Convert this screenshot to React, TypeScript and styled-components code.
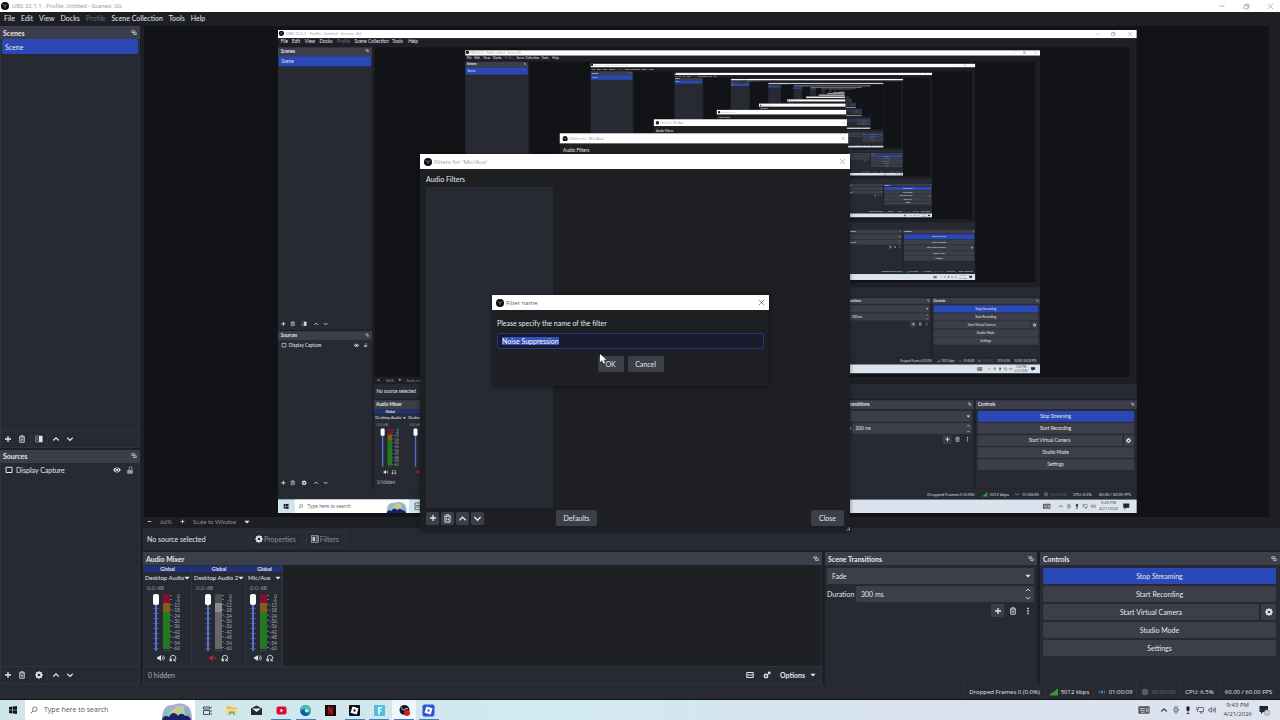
import React, { useEffect, useRef } from 'react';
import styled, { createGlobalStyle, css } from 'styled-components';

const c = {
  window: '#1d1f24',
  dock: '#272a33',
  header: '#3c3f4b',
  button: '#3c3e4a',
  canvas: '#121317',
  blue: '#2a49b6',
  band: '#1f3177',
  text: '#e6e7ec',
  muted: '#8d9099',
  line: '#31343f',
};
const font = 'Lato, "Open Sans", "Noto Sans", sans-serif';
const systemFont = '"Open Sans", "Noto Sans", sans-serif';

const Global = createGlobalStyle`
  * { box-sizing: border-box; }
  body { margin: 0; background: ${c.window}; color: ${c.text}; font: 7px/8px ${font}; overflow: hidden; }
  button, input, select { font: inherit; color: inherit; margin: 0; padding: 0; border: 0; background: none; }
  input:focus, select:focus { outline: none; }
  h1, h2, p, ul { margin: 0; padding: 0; font: inherit; list-style: none; }
  svg { display: block; flex: none; }
`;

/* ---------- icons, all on a 16 unit grid ---------- */

const glyphs: Record<string, React.ReactNode> = {
  plus: <path d="M8 2v12M2 8h12" strokeWidth="2.6" />,
  trash: <path d="M2 4h12M5.500 3.500V1.500h5v2M3.500 4v10.500h9V4M6.500 7v4.500M9.500 7v4.500" strokeWidth="1.700" />,
  up: <path d="M2.500 11L8 5.500l5.500 5.500" strokeWidth="2.400" />,
  down: <path d="M2.500 5.500L8 11l5.500-5.500" strokeWidth="2.400" />,
  caret: <path d="M1 4.500h14L8 12z" fill="currentColor" stroke="none" />,
  gear: (
    <>
      <circle cx="8" cy="8" r="4.400" strokeWidth="3.400" />
      <path d="M8 .5v3M8 12.500v3M.5 8h3M12.500 8h3M2.700 2.700l2 2M11.300 11.300l2 2M13.300 2.700l-2 2M4.700 11.300l-2 2" strokeWidth="2.800" />
    </>
  ),
  gears: (
    <>
      <circle cx="6" cy="10" r="3.400" strokeWidth="3" />
      <circle cx="12.500" cy="4" r="1.800" strokeWidth="2.200" />
    </>
  ),
  filter: (
    <>
      <rect x="1.500" y="2" width="13" height="12" strokeWidth="1.200" opacity="0.700" />
      <path d="M8 2h6.500v12H8z" fill="currentColor" stroke="none" />
      <path d="M3 4.500h4v7H3z" fill="currentColor" stroke="none" opacity="0.300" />
    </>
  ),
  filters: (
    <>
      <rect x="1" y="1.500" width="14" height="13" strokeWidth="1.200" />
      <path d="M3 3.500h5v9H3z" fill="currentColor" stroke="none" />
      <path d="M10.500 2v12M12.800 2v12" strokeWidth="1" />
    </>
  ),
  float: <path d="M2 2h8v4.500H2zM7 6.500v5.500h7V7.500h-4" strokeWidth="1.700" />,
  monitor: <path d="M2 2.500h12v10.500H2z" strokeWidth="2" strokeLinejoin="round" />,
  eye: (
    <>
      <path d="M.5 8C4 1.500 12 1.500 15.500 8 12 14.500 4 14.500.5 8z" fill="currentColor" stroke="none" />
      <circle cx="8" cy="8" r="3.200" fill="none" stroke="#272a33" strokeWidth="1.600" />
    </>
  ),
  lock: (
    <>
      <path d="M2.500 8h11v7.500h-11z" fill="currentColor" stroke="none" />
      <path d="M6.500 8V4a2.700 2.700 0 0 1 5.400 0v4" strokeWidth="1.700" />
    </>
  ),
  speaker: (
    <>
      <path d="M.5 5.500h3L8 2v12l-4.500-3.500h-3z" fill="currentColor" stroke="none" />
      <path d="M10 5c1.700 1.500 1.700 4.500 0 6M12 2.800c3.300 2.700 3.300 7.700 0 10.400" strokeWidth="1.600" />
    </>
  ),
  muted: (
    <>
      <path d="M.5 5.500h3L8 2v12l-4.500-3.500h-3z" fill="currentColor" stroke="none" />
      <path d="M10.500 6l4 4M14.500 6l-4 4" strokeWidth="1.800" />
    </>
  ),
  headset: (
    <>
      <path d="M2.500 14V8a5.500 5.500 0 0 1 11 0v2M2 10h3v4H2zM13.500 14h-3" strokeWidth="1.600" />
      <path d="M8.500 9l5 5M13.500 9l-5 5" strokeWidth="1.900" />
    </>
  ),
  dots: <path d="M8 1.500v3M8 6.500v3M8 11.500v3" strokeWidth="3" />,
  layout: <path d="M1.500 3h13v10h-13zM2 8h12" strokeWidth="2" />,
  minus: <path d="M2 8h12" strokeWidth="2.400" />,
  thin: <path d="M3 8h10" strokeWidth="1.500" />,
  restore: <path d="M2.500 5h8.500v8.500H2.500zM5 5V2.500h8.500V11H11" strokeWidth="1.500" />,
  close: <path d="M2 2l12 12M14 2L2 14" strokeWidth="1.500" />,
  search: (
    <>
      <circle cx="9.500" cy="6.500" r="4.500" strokeWidth="1.300" />
      <path d="M6.300 9.700L1.500 14.500" strokeWidth="1.500" />
    </>
  ),
  bars: <path d="M2 15v-4M6 15V8.500M10 15V5.500M14 15V2" strokeWidth="2.800" />,
  stream: (
    <>
      <circle cx="8" cy="8" r="2.500" fill="currentColor" stroke="none" />
      <path d="M4 4.500c-2 2-2 5 0 7M12 4.500c2 2 2 5 0 7" strokeWidth="1.500" />
    </>
  ),
  dot: <circle cx="8" cy="8" r="6.500" fill="currentColor" stroke="none" />,
  keyboard: (
    <>
      <rect x="0.500" y="3" width="15" height="10" rx="1" fill="currentColor" stroke="none" opacity="0.850" />
      <path d="M2.500 6h7M2.500 8.500h7M4 11h5M11.500 5.500v5.500M13.500 5.500v5.500" stroke="#dbe3ee" strokeWidth="1" />
    </>
  ),
  usb: <path d="M4 2h8M4 5.500h7.500v5H4zM5 14h6M11.500 8h3" strokeWidth="1.400" />,
  mic: (
    <>
      <rect x="5.500" y="1" width="5" height="9" rx="2.500" fill="currentColor" />
      <path d="M8 11v4M5 15h6" strokeWidth="1.500" />
    </>
  ),
  network: <path d="M4.500 3h10.500v8H6M8 14h5M10.500 11v3M1.500 2v5h3V2M3 7v5" strokeWidth="1.300" />,
  sound: <path d="M1.500 6h2.500l3-3v10l-3-3H1.500zM9.500 5.500c1.200 1.500 1.200 3.500 0 5M11.500 4c2 2.300 2 5.700 0 8M13.500 2.500c2.700 3.300 2.700 7.700 0 11" strokeWidth="1.200" />,
  grip: <path d="M14 4v10M10 9v5M6 12v2" strokeWidth="2" />,
};

type IconProps = { name: string; size?: number; color?: string; x?: number; y?: number };
const Icon = ({ name, size = 8, color = 'currentColor', x, y }: IconProps) => (
  <svg x={x} y={y} width={size} height={size} viewBox="0 0 16 16" fill="none" stroke="currentColor" color={color} aria-hidden="true">
    {glyphs[name]}
  </svg>
);

const ObsLogo = ({ size = 8, x, y }: { size?: number; x?: number; y?: number }) => (
  <svg x={x} y={y} width={size} height={size} viewBox="0 0 16 16" aria-hidden="true">
    <circle cx="8" cy="8" r="8" fill="#0c0c0e" />
    <path d="M4 4c.3 2 1.700 3.500 4 3.900 1-2 3-2.500 4.500-1.500M8 7.900c1.200 1.500 1 3.300-.6 4.600" fill="none" stroke="#b4b4ba" strokeWidth="1.300" />
  </svg>
);

const StartLogo = ({ x, y }: { x?: number; y?: number }) => (
  <svg x={x} y={y} width="8" height="8" viewBox="0 0 16 16" aria-hidden="true">
    <path d="M0 2l7-1v6.500H0zM8 .9L16 0v7.500H8zM0 8.500h7V15l-7-1zM8 8.500h8V16l-8-1z" fill="#15181c" />
  </svg>
);

const SearchArt = ({ x, y }: { x?: number; y?: number }) => (
  <svg x={x} y={y} width="32" height="17" viewBox="0 0 32 17" aria-hidden="true">
    <path d="M1 17C1 6 5 1 12 2c4-2 9-2 13 0 5 2 6 8 6 15z" fill="#b9a3dd" />
    <path d="M3 13c1-7 4-9 9-9l3 6z" fill="#7fc7c2" />
    <path d="M14 3l8 0 3 7-8 3z" fill="#b8cf95" />
    <path d="M23 4c5 2 6 6 6 10l-5-3z" fill="#6ec0bb" />
    <path d="M8 10l6-5 4 6z" fill="#e0c08c" />
    <path d="M1 17c1-4 4-5 7-3 3-5 6-5 9-1 2-3 5-3 7 0 3-1 5 1 6 4z" fill="#152468" />
  </svg>
);

/* ---------- shared content ---------- */

const menus = ['File', 'Edit', 'View', 'Docks', 'Profile', 'Scene Collection', 'Tools', 'Help'];
const controls = ['Stop Streaming', 'Start Recording', 'Start Virtual Camera', 'Studio Mode', 'Settings'];
const channels = [
  { name: 'Desktop Audio', width: 49, muted: false },
  { name: 'Desktop Audio 2', width: 54, muted: true },
  { name: 'Mic/Aux', width: 37, muted: false },
];
const levels = ['0', '-6', '-12', '-18', '-24', '-30', '-36', '-42', '-48', '-54', '-60'];

const Meter = ({ muted, plain, x, y }: { muted: boolean; plain?: boolean; x?: number; y?: number }) => {
  const tone = muted ? ['#4b4c50', '#8b8c8f', '#66676a'] : ['#7c1230', '#8a5a17', '#1f7a22'];
  return (
    <svg x={x} y={y} width="20" height="58" viewBox="0 0 20 58" aria-hidden="true">
      <rect x="0" y="0" width="7" height="9" fill={tone[0]} />
      <rect x="0" y="9" width="7" height="9" fill={tone[1]} />
      <rect x="0" y="18" width="7" height="37" fill={tone[2]} />
      <rect x="0" y="56" width="7" height="1" fill="#2c5a32" />
      {!plain && levels.map((l, i) => {
        const ly = i === 0 ? 2 : i === 1 ? 6 : i * 5.4;
        return (
          <g key={l}>
            <rect x="7" y={ly - 1} width="2" height="1" fill="#6c6f78" />
            <text x="17" y={ly + 2} fontSize="5" textAnchor="end" fill="#a4a6ae" fontFamily={font}>{l}</text>
          </g>
        );
      })}
    </svg>
  );
};

/* ---------- the display capture: the desktop repeated inside itself ---------- */

/* Text is drawn down to this nesting level; below it a faint stroke stands in for a word. */
const READABLE_DEPTH = 7;

type LabelProps = { x: number; y: number; children: string; bold?: boolean; fill?: string; mid?: boolean; size?: number; depth: number; family?: string };
const Label = ({ x, y, children, bold, fill = c.text, mid, size = 7, depth, family = font }: LabelProps) => {
  if (depth < READABLE_DEPTH) {
    const w = children.length * 3;
    return <rect x={mid ? x - w / 2 : x} y={y - 1} width={w} height="3" fill={fill} opacity="0.500" />;
  }
  return (
    <text x={x} y={y + 2} fontSize={size} fontFamily={family} fontWeight={bold ? 700 : 400} fill={fill} textAnchor={mid ? 'middle' : 'start'}>
      {children}
    </text>
  );
};

const menuX = [4, 21, 40, 62, 88, 114, 170, 194];
const channelX = [143, 192, 246];

const DesktopPicture = ({ depth }: { depth: number }) => (
  <>
    <rect width="1280" height="720" fill={c.window} />
    <rect width="1280" height="12" fill="#fff" />
    <ObsLogo x={1} y={1} />
    <Label depth={depth} x={12} y={6} size={6} fill="#a5a5a8">OBS 32.1.1 - Profile: Untitled - Scenes: GG</Label>
    <Icon name="thin" x={1218} y={2} color="#999" />
    <Icon name="restore" x={1241} y={2} color="#888" />
    <Icon name="close" x={1266} y={2} color="#888" />
    {menus.map((m, i) => <Label depth={depth} key={m} x={menuX[i]} y={18} fill={m === 'Profile' ? '#6c6e76' : c.text}>{m}</Label>)}

    <rect x="0" y="26" width="140" height="658" fill={c.dock} />
    <rect x="0" y="26" width="140" height="13" fill={c.header} />
    <Label depth={depth} x={4} y={32} bold>Scenes</Label>
    <Icon name="float" x={130} y={28} size={6} />
    <rect x="1" y="39" width="138" height="15" rx="1" fill={c.blue} />
    <Label depth={depth} x={5} y={47}>Scene</Label>
    <rect x="0" y="447" width="140" height="2" fill={c.window} />
    <rect x="0" y="449" width="140" height="13" fill={c.header} />
    <Label depth={depth} x={4} y={455} bold>Sources</Label>
    <Icon name="float" x={130} y={452} size={6} />
    <Icon name="monitor" x={5} y={466} />
    <Label depth={depth} x={16} y={470}>Display Capture</Label>
    <Icon name="eye" x={113} y={466} />
    <Icon name="lock" x={127} y={466} size={7} color="#9a9ca5" />
    {[438, 675].map((y) => (
      <g key={y}>
        <Icon name="plus" x={4} y={y - 4} />
        <Icon name="trash" x={18} y={y - 4} />
        <Icon name={y === 438 ? 'filter' : 'gear'} x={35} y={y - 4} />
        <Icon name="up" x={53} y={y - 4} />
        <Icon name="down" x={67} y={y - 4} />
      </g>
    ))}

    <rect x="144" y="26" width="1125" height="491" fill={c.canvas} />
    {depth > 0 && (
      <svg x="279" y="30" width="857" height="482" viewBox="0 0 1280 720">
        <DesktopPicture depth={depth - 1} />
      </svg>
    )}
    <Icon name="minus" x={147} y={519} size={6} />
    <Label depth={depth} x={161} y={522} fill={c.muted} size={6}>66%</Label>
    <Icon name="plus" x={179} y={519} size={5} />
    <Label depth={depth} x={191} y={522} fill={c.muted} size={6}>Scale to Window</Label>
    <rect x="143" y="528" width="1137" height="22" fill={c.dock} />
    <Label depth={depth} x={147} y={539}>No source selected</Label>

    <rect x="143" y="552" width="679" height="132" fill={c.dock} />
    <rect x="143" y="552" width="679" height="13" fill={c.header} />
    <Label depth={depth} x={146} y={559} bold>Audio Mixer</Label>
    <rect x="143" y="566" width="140" height="6" fill={c.band} />
    {channels.map((ch, i) => (
      <g key={ch.name}>
        <Label depth={depth} x={channelX[i] + ch.width / 2} y={569} bold mid size={5}>Global</Label>
        <Label depth={depth} x={channelX[i] + 2} y={578} size={6}>{ch.name}</Label>
        <Icon name="caret" x={channelX[i] + ch.width - 6} y={576} size={5} />
        <Label depth={depth} x={channelX[i] + 4} y={588} size={6} fill={c.muted}>0.0 dB</Label>
        <rect x={channelX[i] + 12} y="594" width="2" height="57" fill="#5470d0" />
        <rect x={channelX[i] + 10} y="594" width="6" height="11" rx="2" fill="#fff" />
        <Meter muted={ch.muted} plain={depth < READABLE_DEPTH} x={channelX[i] + 20} y={594} />
        <Icon name={ch.muted ? 'muted' : 'speaker'} x={channelX[i] + 14} y={655} color={ch.muted ? '#c0203c' : c.text} />
        <Icon name="headset" x={channelX[i] + 26} y={655} />
      </g>
    ))}
    <Label depth={depth} x={148} y={675} fill="#b0b2ba">0 hidden</Label>

    <rect x="825" y="552" width="212" height="132" fill={c.dock} />
    <rect x="825" y="552" width="212" height="13" fill={c.header} />
    <Label depth={depth} x={828} y={559} bold>Scene Transitions</Label>
    <Icon name="float" x={1028} y={555} size={6} />
    <rect x="827" y="568" width="207" height="16" fill={c.button} />
    <Label depth={depth} x={832} y={576}>Fade</Label>
    <Icon name="caret" x={1026} y={573} size={6} />
    <rect x="856" y="586" width="178" height="16" fill={c.button} />
    <Label depth={depth} x={827} y={594}>Duration</Label>
    <Label depth={depth} x={861} y={594}>300 ms</Label>
    <Icon name="up" x={1026} y={587} size={6} />
    <Icon name="down" x={1026} y={595} size={6} />
    <rect x="991" y="604" width="13" height="13" fill={c.button} />
    <Icon name="plus" x={994} y={606} />
    <Icon name="trash" x={1009} y={606} />
    <Icon name="dots" x={1024} y={606} />

    <rect x="1040" y="552" width="240" height="132" fill={c.dock} />
    <rect x="1040" y="552" width="240" height="13" fill={c.header} />
    <Label depth={depth} x={1043} y={559} bold>Controls</Label>
    <Icon name="float" x={1271} y={555} size={6} />
    {controls.map((t, i) => (
      <g key={t}>
        <rect x="1043" y={568 + i * 18} width={i === 2 ? 216 : 233} height="16" rx="1" fill={i ? c.button : c.blue} />
        <Label depth={depth} x={i === 2 ? 1150 : 1159} y={576 + i * 18} mid>{t}</Label>
      </g>
    ))}
    <rect x="1261" y="604" width="15" height="16" rx="1" fill={c.button} />
    <Icon name="gear" x={1264} y={608} />

    <rect x="0" y="684" width="1280" height="16" fill={c.dock} />
    <g>
      <Label depth={depth} family={systemFont} size={6} x={968} y={692}>Dropped Frames 0 (0.0%)</Label>
      <Icon name="bars" x={1050} y={688} color="#3cc63c" />
      <Label depth={depth} family={systemFont} size={6} x={1061} y={692}>5012 kbps</Label>
      <Icon name="stream" x={1098} y={688} color="#3f8fd0" />
      <Label depth={depth} family={systemFont} size={6} x={1110} y={692}>01:00:09</Label>
      <Icon name="dot" x={1141} y={688} color="#5a5c64" />
      <Label depth={depth} family={systemFont} size={6} x={1152} y={692} fill="#6c6e76">00:00:00</Label>
      <Label depth={depth} family={systemFont} size={6} x={1185} y={692}>CPU: 6.5%</Label>
      <Label depth={depth} family={systemFont} size={6} x={1224} y={692}>60.00 / 60.00 FPS</Label>
    </g>

    <rect x="0" y="700" width="1280" height="20" fill="#dbe3ee" />
    <rect x="0" y="700" width="440" height="20" fill="#d0e6ec" />
    <StartLogo x={8} y={706} />
    <rect x="25" y="700" width="170" height="20" fill="#fff" />
    <Icon name="search" x={30} y={706} color="#333" />
    <Label depth={depth} family={systemFont} x={44} y={710} fill="#555">Type here to search</Label>
    <SearchArt x={161} y={703} />
    <path d="M204 705h8v4h-8zM204 711h8v4h-8z" fill="none" stroke="#33414a" />
    <Icon name="keyboard" x={1140} y={704} size={12} color="#444" />
    <Icon name="up" x={1163} y={706} color="#444" />
    <Icon name="usb" x={1175} y={706} color="#444" />
    <Icon name="mic" x={1187} y={706} color="#222" />
    <Icon name="network" x={1199} y={706} color="#444" />
    <Icon name="sound" x={1211} y={706} color="#444" />
    <Label depth={depth} family={systemFont} size={6} x={1227} y={705} fill="#444">9:43 PM</Label>
    <Label depth={depth} family={systemFont} size={6} x={1224} y={714} fill="#444">4/21/2026</Label>
    <path d="M1260 706h9v6h-5l-2 3v-3h-2z" fill="#22252a" />

    <rect x="420" y="154" width="430" height="377" fill="#1e1f23" />
    <rect x="420" y="154" width="430" height="15" fill="#fff" />
    <ObsLogo x={424} y={158} />
    <Label depth={depth} family={systemFont} size={6} x={434} y={162} fill="#9a9a9e">Filters for 'Mic/Aux'</Label>
    <Icon name="close" x={839} y={158} size={7} color="#888" />
    <Label depth={depth} x={425} y={180}>Audio Filters</Label>
    <rect x="426" y="187" width="127" height="322" fill={c.dock} />
  </>
);

/* ---------- page frame ---------- */

const Desktop = styled.div`
  display: flex;
  flex-direction: column;
  height: 100vh;
  min-height: 600px;
  position: relative;
`;
const TitleBar = styled.header`
  display: flex;
  align-items: center;
  gap: 3px;
  height: 12px;
  padding: 0 6px 0 1px;
  background: #fff;
  color: #a3a3a6;
  font-family: Roboto, sans-serif;
  font-size: 6px;
  h1 { flex: 1; }
`;
const WindowButtons = styled.div`
  display: flex;
  gap: 17px;
  color: #8f8f92;
`;
const BareButton = styled.button`
  display: flex;
  align-items: center;
  justify-content: center;
`;
const MenuBar = styled.nav`
  display: flex;
  align-items: center;
  gap: 6px;
  height: 14px;
  padding: 0 4px 2px;
  background: ${c.window};
`;
const MenuItem = styled.button<{ $off?: boolean }>`
  color: ${(p) => (p.$off ? '#6c6e76' : c.text)};
`;
const Workspace = styled.main`
  display: flex;
  flex: 1;
  gap: 3px;
  min-height: 0;
`;
const SideColumn = styled.div`
  display: grid;
  grid-template-rows: 9fr 5fr;
  gap: 2px;
  width: 140px;
`;
const StageColumn = styled.div`
  display: flex;
  flex-direction: column;
  flex: 1;
  min-width: 0;
`;
const DockRow = styled.div`
  display: flex;
  gap: 3px;
  height: 132px;
  margin-top: 2px;
`;

/* ---------- docks ---------- */

const DockBox = styled.section<{ $width?: number }>`
  display: flex;
  flex-direction: column;
  min-width: 0;
  min-height: 0;
  ${(p) => (p.$width ? css`width: ${p.$width}px;` : css`flex: 1;`)}
  background: ${c.dock};
`;
const DockHeader = styled.header`
  display: flex;
  align-items: center;
  justify-content: space-between;
  height: 13px;
  padding: 0 3px;
  background: ${c.header};
  h2 { font-weight: 700; }
`;
const Dock = ({ title, width, children }: { title: string; width?: number; children: React.ReactNode }) => (
  <DockBox $width={width}>
    <DockHeader>
      <h2>{title}</h2>
      <BareButton aria-label={`Float ${title}`}><Icon name="float" size={6} /></BareButton>
    </DockHeader>
    {children}
  </DockBox>
);
const DockList = styled.ul`
  flex: 1;
  padding: 0 1px;
  border: solid ${c.line};
  border-width: 0 1px;
`;
const ListItem = styled.li<{ $selected?: boolean }>`
  display: flex;
  align-items: center;
  gap: 3px;
  height: 15px;
  padding: 0 3px;
  border-radius: 2px;
  background: ${(p) => (p.$selected ? c.blue : 'none')};
  span { flex: 1; }
  button { width: 10px; }
`;
const DockTools = styled.div`
  display: flex;
  align-items: center;
  gap: 6px;
  height: 18px;
  padding: 0 3px;
  border: 1px solid ${c.line};
`;
const Divider = styled.i`
  width: 1px;
  height: 12px;
  margin: 0 -2px;
  background: ${c.line};
`;
const ListTools = ({ middle }: { middle: string }) => (
  <DockTools>
    <BareButton aria-label="Add"><Icon name="plus" /></BareButton>
    <BareButton aria-label="Remove"><Icon name="trash" /></BareButton>
    <Divider />
    <BareButton aria-label="Configure"><Icon name={middle} /></BareButton>
    <Divider />
    <BareButton aria-label="Move up"><Icon name="up" /></BareButton>
    <BareButton aria-label="Move down"><Icon name="down" /></BareButton>
  </DockTools>
);

/* ---------- preview ---------- */

const PreviewFrame = styled.div`
  display: flex;
  flex: 1;
  min-height: 0;
  padding: 0 11px 0 1px;
  background: ${c.window};
`;
const PreviewCanvas = styled.div`
  display: flex;
  align-items: center;
  justify-content: center;
  flex: 1;
  min-width: 0;
  padding: 4px 0 4px 2px;
  background: ${c.canvas};
`;
const CapturedDisplay = styled.svg`
  height: 100%;
  aspect-ratio: 16 / 9;
`;
const ZoomBar = styled.div`
  display: flex;
  align-items: center;
  gap: 8px;
  height: 11px;
  padding: 0 4px 2px;
  font-size: 6px;
  color: ${c.muted};
`;
const ZoomSelect = styled.select`
  appearance: none;
  width: 43px;
`;
const SourceBar = styled.div`
  display: flex;
  align-items: center;
  gap: 3px;
  height: 22px;
  padding: 0 4px;
  background: ${c.dock};
  p { width: 100px; }
`;
const SourceButton = styled.button`
  display: flex;
  align-items: center;
  gap: 1px;
  height: 16px;
  padding: 0 6px 0 4px;
  border: 1px solid ${c.line};
  border-radius: 2px;
  color: ${c.muted};
`;

/* ---------- mixer ---------- */

const MixerBody = styled.div`
  display: flex;
  flex: 1;
  min-height: 0;
  margin-right: 1px;
  background: #1e2023;
`;
const Channel = styled.div<{ $width: number }>`
  display: flex;
  flex-direction: column;
  width: ${(p) => p.$width}px;
  padding-top: 1px;
  background: ${c.dock};
  border-right: 1px solid ${c.line};
`;
const GlobalBand = styled.div`
  height: 6px;
  margin-right: -1px;
  background: ${c.band};
  font-size: 5px;
  line-height: 6px;
  font-weight: 700;
  text-align: center;
`;
const ChannelName = styled.button`
  display: flex;
  align-items: center;
  justify-content: space-between;
  height: 12px;
  padding: 0 1px 0 2px;
  font-size: 6px;
  white-space: nowrap;
`;
const Decibels = styled.div`
  padding: 0 4px;
  font-size: 6px;
  color: ${c.muted};
`;
const Fader = styled.div`
  display: flex;
  justify-content: center;
  height: 60px;
  padding: 2px 0 0 2px;
  gap: 4px;
`;
const VolumeSlider = styled.input`
  appearance: none;
  writing-mode: vertical-lr;
  direction: rtl;
  width: 6px;
  height: 57px;
  background:
    linear-gradient(#5470d0, #5470d0) center / 2px 100% no-repeat,
    repeating-linear-gradient(transparent 0 4px, #44507e 4px 5px);
  &::-webkit-slider-thumb {
    appearance: none;
    width: 6px;
    height: 11px;
    border-radius: 2px;
    background: #fff;
  }
`;
const ChannelTools = styled.div`
  display: flex;
  justify-content: center;
  gap: 4px;
  padding-top: 2px;
`;
const MixerFooter = styled(DockTools)`
  gap: 9px;
  padding: 0 5px 0 4px;
  span { flex: 1; color: #b0b2ba; }
`;
const OptionsButton = styled(BareButton)`
  gap: 5px;
  font-weight: 700;
`;

/* ---------- transitions and controls ---------- */

const Form = styled.div`
  display: flex;
  flex-direction: column;
  gap: 2px;
  padding: 3px 3px 0 2px;
`;
const FieldRow = styled.div`
  display: flex;
  align-items: center;
  gap: 2px;
  label { width: 27px; }
`;
const FieldBox = styled.div`
  display: flex;
  align-items: center;
  flex: 1 0 auto;
  height: 16px;
  padding: 0 3px 0 5px;
  border-radius: 2px;
  background: ${c.button};
  select, input { appearance: none; flex: 1; min-width: 0; }
`;
const Spin = styled.div`
  display: flex;
  flex-direction: column;
  gap: 2px;
`;
const EndTools = styled.div`
  display: flex;
  justify-content: flex-end;
  gap: 2px;
`;
const SquareButton = styled(BareButton)<{ $filled?: boolean }>`
  width: 13px;
  height: 13px;
  border-radius: 2px;
  background: ${(p) => (p.$filled ? c.button : 'none')};
`;
const ControlStack = styled(Form)`
  padding: 3px 4px 0 3px;
`;
const PushButton = styled.button<{ $primary?: boolean; $width?: number }>`
  height: 16px;
  ${(p) => (p.$width ? css`width: ${p.$width}px;` : css`flex: 1 0 auto;`)}
  border-radius: 2px;
  background: ${(p) => (p.$primary ? c.blue : c.button)};
  display: flex;
  align-items: center;
  justify-content: center;
`;

/* ---------- status bar and taskbar ---------- */

const StatusBar = styled.footer`
  display: flex;
  justify-content: flex-end;
  align-items: center;
  height: 16px;
  padding-right: 3px;
  background: ${c.dock};
  border-bottom: 1px solid #14151a;
  font: 6px/8px ${systemFont};
`;
const StatusItem = styled.span<{ $width: number; $off?: boolean }>`
  display: flex;
  align-items: center;
  justify-content: center;
  gap: 3px;
  width: ${(p) => p.$width}px;
  height: 100%;
  border-left: 1px solid ${c.line};
  color: ${(p) => (p.$off ? '#6c6e76' : c.text)};
  white-space: nowrap;
`;
const TaskBar = styled.footer`
  display: flex;
  align-items: stretch;
  height: 20px;
  background: linear-gradient(90deg, #cfe5ea, #d2e9ef 45%, #dae2ed 75%, #dde4f0);
  color: #3b3d42;
  font-family: ${systemFont};
`;
const StartButton = styled(BareButton)`
  width: 25px;
`;
const SearchBox = styled.label`
  display: flex;
  align-items: center;
  gap: 6px;
  width: 170px;
  padding: 0 2px 0 5px;
  background: #fff;
  input { flex: 1; min-width: 0; }
  input::placeholder { color: #55575c; opacity: 1; }
  svg:last-child { align-self: flex-end; }
`;
const TaskIcons = styled.div`
  display: flex;
  flex: none;
  width: 246px;
`;
const TaskButton = styled(BareButton)<{ $open?: boolean; $active?: boolean }>`
  flex: 1;
  ${(p) => p.$open && css`
    background: linear-gradient(#3c7fc8, #3c7fc8) center bottom / 20px 1px no-repeat;
  `}
  ${(p) => p.$active && css`background-color: #eef7f9;`}
`;
const Tray = styled.div`
  display: flex;
  align-items: center;
  gap: 4px;
  margin-left: auto;
  padding-right: 10px;
`;
const KeyboardSlot = styled.span`
  margin-right: 6px;
`;
const Clock = styled.time`
  margin: 0 3px 0 4px;
  font-size: 6px;
  line-height: 9px;
  text-align: center;
  white-space: nowrap;
`;

/* ---------- floating windows ---------- */

const Floating = styled.section<{ $x: number; $y: number; $w: number; $h: number }>`
  position: absolute;
  left: ${(p) => p.$x}px;
  top: ${(p) => p.$y}px;
  width: ${(p) => p.$w}px;
  height: ${(p) => p.$h}px;
  display: flex;
  flex-direction: column;
  background: #1e1f23;
  box-shadow: 0 1px 4px rgba(10, 10, 14, 0.5);
`;
const FloatingTitle = styled.header<{ $dim?: boolean }>`
  display: flex;
  align-items: center;
  gap: 2px;
  height: 15px;
  padding: 0 4px;
  background: #fff;
  color: ${(p) => (p.$dim ? '#9a9a9e' : '#55565a')};
  font: 6px/8px ${systemFont};
  h2 { flex: 1; }
`;
const FiltersBody = styled.div`
  display: grid;
  grid-template-columns: 127px 1fr;
  grid-template-rows: 10px 1fr 16px;
  gap: 2px 3px;
  flex: 1;
  padding: 6px 6px 5px;
`;
const FilterList = styled.div`
  grid-column: 1;
  background: ${c.dock};
`;
const FilterTools = styled.div`
  grid-column: 1;
  display: flex;
  align-items: center;
  gap: 2px;
`;
const FilterActions = styled.div`
  display: flex;
  justify-content: space-between;
`;
const Grip = styled.div`
  position: absolute;
  right: 0;
  bottom: 0;
`;
const NameForm = styled.form`
  display: flex;
  flex-direction: column;
  padding: 9px 5px;
  gap: 6px;
`;
const NameInput = styled.input`
  height: 16px;
  padding: 0 4px;
  border: 1px solid #2b3480;
  border-radius: 2px;
  background: #181b2c;
  &::selection { background: #3154bd; color: #fff; }
`;
const NameActions = styled.div`
  display: flex;
  justify-content: center;
  gap: 4px;
  padding-top: 1px;
`;
const Pointer = styled.svg`
  position: absolute;
  left: 108px;
  top: 59px;
`;

/* ---------- task bar application marks ---------- */

const Mark = ({ children }: { children: React.ReactNode }) => (
  <svg width="13" height="13" viewBox="0 0 26 26" aria-hidden="true">{children}</svg>
);
const apps: { label: string; open?: boolean; active?: boolean; art: React.ReactNode }[] = [
  { label: 'Task view', art: <path d="M5 6h12v4H5zM5 13h12v8H5zM20 5v4M20 12v4M20 18v4" fill="none" stroke="#33414a" strokeWidth="1.800" /> },
  { label: 'File Explorer', art: <><path d="M3 4h8l2 3h10v15H3z" fill="#eebf4d" /><path d="M3 10h20v12H3z" fill="#fad979" /><path d="M8 22v-7h11v7h-3v-4h-5v4z" fill="#4da3d8" /></> },
  { label: 'Mail', art: <><path d="M2 9l11-6 11 6v13H2z" fill="#26292d" /><path d="M4 9h18l-9 7z" fill="#eef4f6" /></> },
  { label: 'YouTube', open: true, art: <><rect x="3" y="5" width="20" height="16" rx="4" fill="#d8102e" /><path d="M11 9.500v7l6-3.500z" fill="#fff" /></> },
  { label: 'Microsoft Edge', open: true, art: <><circle cx="13" cy="13" r="11" fill="#1b79c4" /><path d="M3 11C5 1 20 0 24 11c1 6-6 7-9 5 2-4-1-7-5-6-3 0-6 1-7 4z" fill="#43c6a8" /><path d="M10 13c0 6 5 8 11 7-4 5-12 5-16-1-1-6 2-8 5-6z" fill="#1456a0" /><circle cx="15" cy="13" r="3" fill="#dff3f6" /></> },
  { label: 'Netflix', art: <><rect x="2" y="2" width="22" height="22" fill="#15080a" /><path d="M8 5h3.500l6.500 16h-3.500z" fill="#e01326" /><path d="M8 5h3v16H8zM15 5h3v16h-3z" fill="#a50e1c" /></> },
  { label: 'Roblox', open: true, art: <><rect x="2" y="2" width="22" height="22" rx="2" fill="#0d0e10" /><path d="M9 5l12 3.500L17.500 21 5 17.500z" fill="#fff" /><path d="M11.500 10.500l4 1-1 4-4-1z" fill="#0d0e10" /></> },
  { label: 'Fortnite', open: true, art: <><rect x="2" y="2" width="22" height="22" fill="#52bfe2" /><path d="M10 6h8v3h-4.500v3H17v3h-3.500v6H10z" fill="#e9f8fd" /></> },
  { label: 'OBS Studio', open: true, active: true, art: <><circle cx="13" cy="12" r="10" fill="#191a1e" /><path d="M7 7c1 4 3 5 6 5 1-3 4-4 7-2" fill="none" stroke="#c9cacf" strokeWidth="2" /><circle cx="18" cy="18" r="6" fill="#de1a24" /></> },
  { label: 'Roblox Studio', open: true, art: <><rect x="1" y="1" width="24" height="24" rx="4" fill="#2f52d3" /><path d="M9 5l12 3.500L17.500 21 5 17.500z" fill="#fff" /><path d="M11.500 10.500l4 1-1 4-4-1z" fill="#2f52d3" /></> },
];

export default function App() {
  const nameRef = useRef<HTMLInputElement>(null);
  useEffect(() => {
    nameRef.current?.focus();
    nameRef.current?.select();
  }, []);

  return (
    <Desktop>
      <Global />
      <TitleBar>
        <ObsLogo />
        <h1>OBS 32.1.1 - Profile: Untitled - Scenes: GG</h1>
        <WindowButtons>
          <BareButton aria-label="Minimize"><Icon name="thin" /></BareButton>
          <BareButton aria-label="Restore"><Icon name="restore" size={7} /></BareButton>
          <BareButton aria-label="Close"><Icon name="close" size={7} /></BareButton>
        </WindowButtons>
      </TitleBar>
      <MenuBar>
        {menus.map((m) => <MenuItem key={m} $off={m === 'Profile'}>{m}</MenuItem>)}
      </MenuBar>

      <Workspace>
        <SideColumn>
          <Dock title="Scenes">
            <DockList><ListItem $selected><span>Scene</span></ListItem></DockList>
            <ListTools middle="filter" />
          </Dock>
          <Dock title="Sources">
            <DockList>
              <ListItem>
                <Icon name="monitor" />
                <span>Display Capture</span>
                <BareButton aria-label="Hide source"><Icon name="eye" /></BareButton>
                <BareButton aria-label="Lock source"><Icon name="lock" color="#9a9ca5" /></BareButton>
              </ListItem>
            </DockList>
            <ListTools middle="gear" />
          </Dock>
        </SideColumn>

        <StageColumn>
          <PreviewFrame>
            <PreviewCanvas>
              <CapturedDisplay viewBox="0 0 1280 720">
                <DesktopPicture depth={10} />
              </CapturedDisplay>
            </PreviewCanvas>
          </PreviewFrame>
          <ZoomBar>
            <BareButton aria-label="Zoom out"><Icon name="minus" size={5} color={c.text} /></BareButton>
            <span>66%</span>
            <BareButton aria-label="Zoom in"><Icon name="plus" size={5} color={c.text} /></BareButton>
            <ZoomSelect aria-label="Preview scale"><option>Scale to Window</option></ZoomSelect>
            <Icon name="caret" size={6} color={c.text} />
          </ZoomBar>
          <SourceBar>
            <p>No source selected</p>
            <SourceButton><Icon name="gear" color={c.text} />Properties</SourceButton>
            <SourceButton><Icon name="filters" color="#c6c8cf" />Filters</SourceButton>
          </SourceBar>

          <DockRow>
            <Dock title="Audio Mixer">
              <MixerBody>
                {channels.map((ch) => (
                  <Channel key={ch.name} $width={ch.width}>
                    <GlobalBand>Global</GlobalBand>
                    <ChannelName>{ch.name}<Icon name="caret" size={6} /></ChannelName>
                    <Decibels>0.0 dB</Decibels>
                    <Fader>
                      <VolumeSlider type="range" min={-60} max={0} defaultValue={0} aria-label={`${ch.name} volume`} />
                      <Meter muted={ch.muted} />
                    </Fader>
                    <ChannelTools>
                      <BareButton aria-label={`Mute ${ch.name}`}>
                        <Icon name={ch.muted ? 'muted' : 'speaker'} color={ch.muted ? '#c0203c' : c.text} />
                      </BareButton>
                      <BareButton aria-label={`Monitor ${ch.name}`}><Icon name="headset" /></BareButton>
                    </ChannelTools>
                  </Channel>
                ))}
              </MixerBody>
              <MixerFooter>
                <span>0 hidden</span>
                <BareButton aria-label="Mixer layout"><Icon name="layout" /></BareButton>
                <BareButton aria-label="Advanced audio"><Icon name="gears" /></BareButton>
                <OptionsButton>Options<Icon name="caret" size={6} /></OptionsButton>
              </MixerFooter>
            </Dock>

            <Dock title="Scene Transitions" width={212}>
              <Form>
                <FieldBox>
                  <select aria-label="Transition"><option>Fade</option></select>
                  <Icon name="caret" size={6} />
                </FieldBox>
                <FieldRow>
                  <label htmlFor="duration">Duration</label>
                  <FieldBox>
                    <input id="duration" defaultValue="300 ms" />
                    <Spin><Icon name="up" size={6} /><Icon name="down" size={6} /></Spin>
                  </FieldBox>
                </FieldRow>
                <EndTools>
                  <SquareButton $filled aria-label="Add transition"><Icon name="plus" /></SquareButton>
                  <SquareButton aria-label="Remove transition"><Icon name="trash" /></SquareButton>
                  <SquareButton aria-label="Transition menu"><Icon name="dots" /></SquareButton>
                </EndTools>
              </Form>
            </Dock>

            <Dock title="Controls" width={240}>
              <ControlStack>
                {controls.map((t, i) => (
                  <FieldRow key={t}>
                    <PushButton $primary={i === 0}>{t}</PushButton>
                    {i === 2 && <PushButton $width={15} aria-label="Virtual camera settings"><Icon name="gear" /></PushButton>}
                  </FieldRow>
                ))}
              </ControlStack>
            </Dock>
          </DockRow>
        </StageColumn>
      </Workspace>

      <StatusBar>
        <StatusItem $width={82}>Dropped Frames 0 (0.0%)</StatusItem>
        <StatusItem $width={48}><Icon name="bars" color="#3cc63c" />5012 kbps</StatusItem>
        <StatusItem $width={43}><Icon name="stream" color="#3f8fd0" />01:00:09</StatusItem>
        <StatusItem $width={43} $off><Icon name="dot" color="#5a5c64" />00:00:00</StatusItem>
        <StatusItem $width={40}>CPU: 6.5%</StatusItem>
        <StatusItem $width={58}>60.00 / 60.00 FPS</StatusItem>
      </StatusBar>

      <TaskBar>
        <StartButton aria-label="Start"><StartLogo /></StartButton>
        <SearchBox>
          <Icon name="search" />
          <input type="text" placeholder="Type here to search" aria-label="Search" />
          <SearchArt />
        </SearchBox>
        <TaskIcons>
          {apps.map((a) => (
            <TaskButton key={a.label} $open={a.open} $active={a.active} aria-label={a.label}><Mark>{a.art}</Mark></TaskButton>
          ))}
        </TaskIcons>
        <Tray>
          <KeyboardSlot><Icon name="keyboard" size={12} /></KeyboardSlot>
          <Icon name="up" />
          <Icon name="usb" />
          <Icon name="mic" color="#1d1e22" />
          <Icon name="network" />
          <Icon name="sound" />
          <Clock>9:43 PM<br />4/21/2026</Clock>
          <svg width="11" height="11" viewBox="0 0 22 22" aria-hidden="true">
            <path d="M1 2h17v12H8l-4 4v-4H1z" fill="#22252a" />
            <circle cx="16" cy="15" r="5.500" fill="#dfe5ef" stroke="#555" />
            <text x="16" y="18" fontSize="8" textAnchor="middle" fontFamily={systemFont} fill="#222">1</text>
          </svg>
        </Tray>
      </TaskBar>

      <Floating $x={420} $y={154} $w={430} $h={377} aria-label="Filters">
        <FloatingTitle $dim>
          <ObsLogo />
          <h2>Filters for 'Mic/Aux'</h2>
          <BareButton aria-label="Close window"><Icon name="close" size={7} /></BareButton>
        </FloatingTitle>
        <FiltersBody>
          <p>Audio Filters</p>
          <FilterList />
          <FilterTools>
            <SquareButton $filled aria-label="Add filter"><Icon name="plus" /></SquareButton>
            <SquareButton $filled aria-label="Remove filter"><Icon name="trash" size={9} /></SquareButton>
            <SquareButton $filled aria-label="Move filter up"><Icon name="up" size={9} /></SquareButton>
            <SquareButton $filled aria-label="Move filter down"><Icon name="down" size={9} /></SquareButton>
          </FilterTools>
          <FilterActions>
            <PushButton $width={41}>Defaults</PushButton>
            <PushButton $width={33}>Close</PushButton>
          </FilterActions>
        </FiltersBody>
        <Grip><Icon name="grip" size={5} /></Grip>
      </Floating>

      <Floating $x={492} $y={295} $w={277} $h={91} role="dialog" aria-label="Filter name">
        <FloatingTitle>
          <ObsLogo />
          <h2>Filter name</h2>
          <BareButton aria-label="Close dialog"><Icon name="close" size={7} /></BareButton>
        </FloatingTitle>
        <NameForm onSubmit={(e) => e.preventDefault()}>
          <label htmlFor="filter-name">Please specify the name of the filter</label>
          <NameInput id="filter-name" ref={nameRef} defaultValue="Noise Suppression" />
          <NameActions>
            <PushButton type="submit" $width={26}>OK</PushButton>
            <PushButton type="button" $width={36}>Cancel</PushButton>
          </NameActions>
        </NameForm>
        <Pointer width="7" height="10" viewBox="0 0 14 20" aria-hidden="true">
          <path d="M0 0v16l4-3.500L7 19l3-1.500L7 11.500h6z" fill="#fff" />
        </Pointer>
      </Floating>
    </Desktop>
  );
}
